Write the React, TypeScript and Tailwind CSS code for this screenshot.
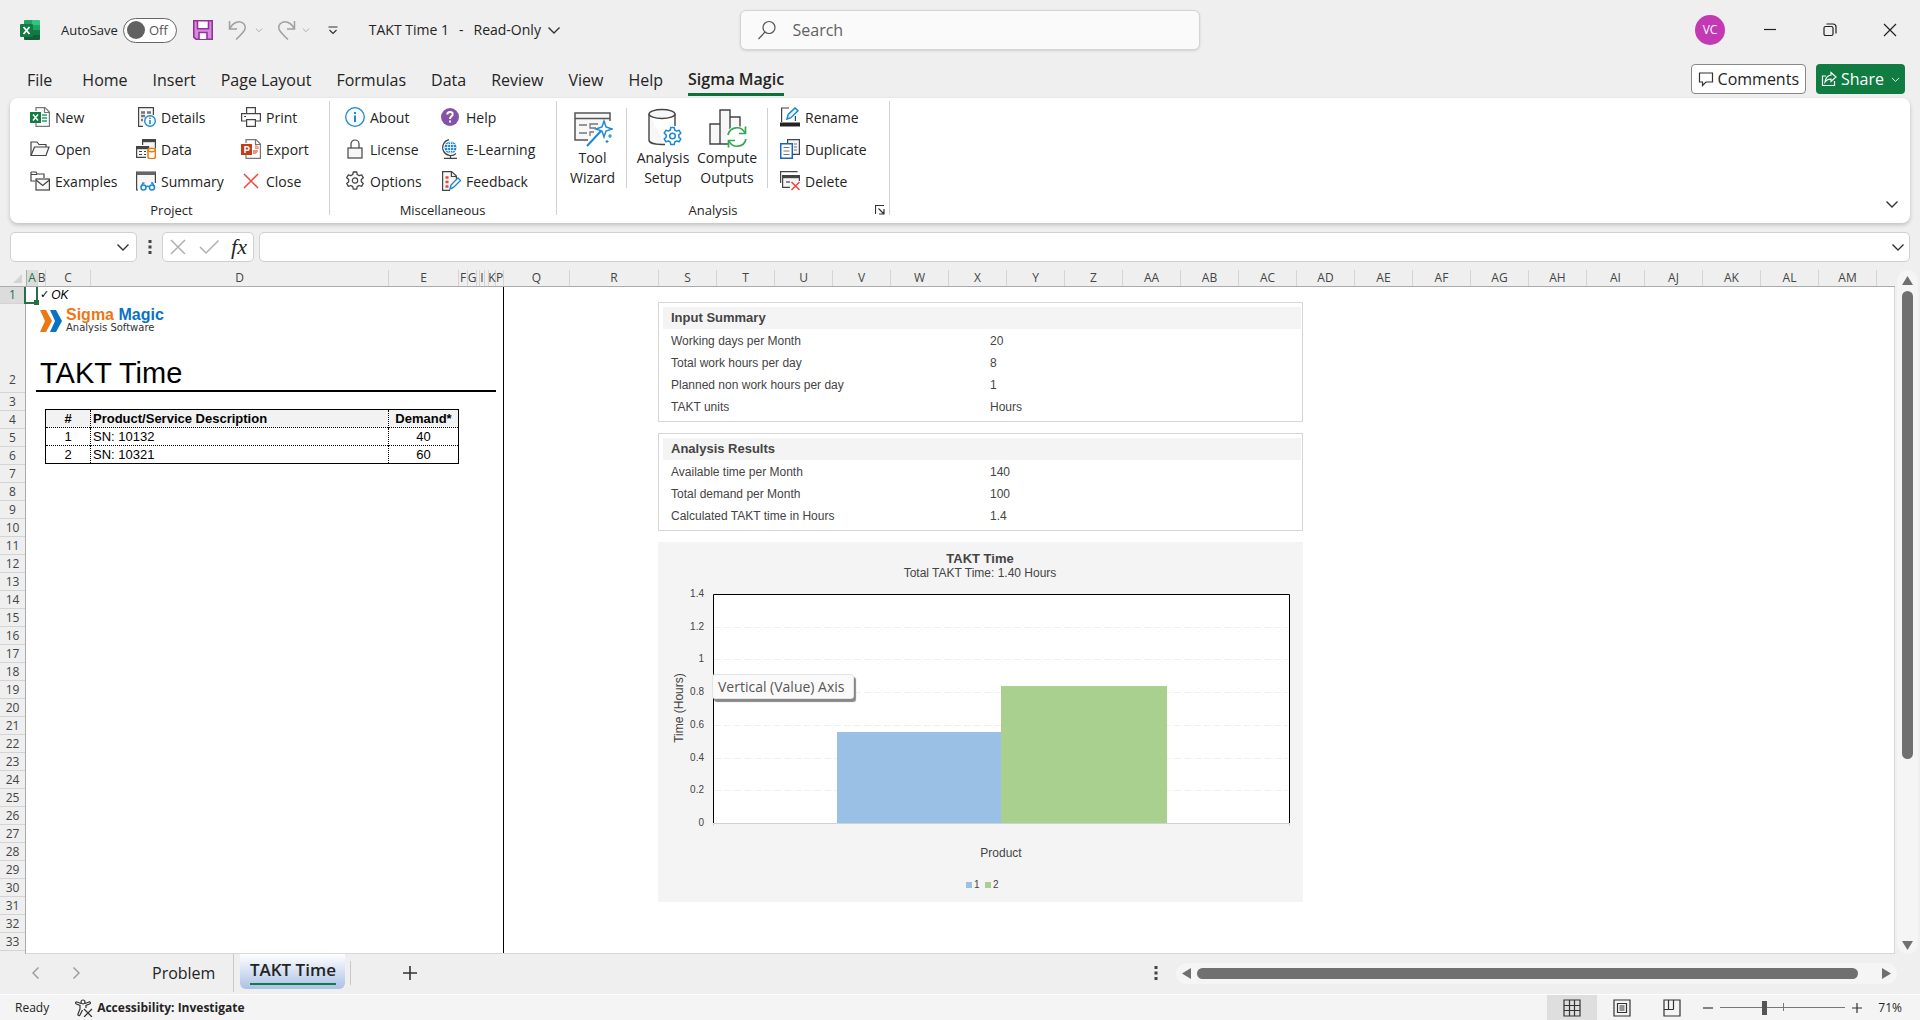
// App.tsx
import React from "react";

const columns = [
  { name: "A", width: 11 },
  { name: "B", width: 8 },
  { name: "C", width: 45 },
  { name: "D", width: 298 },
  { name: "E", width: 70 },
  { name: "F", width: 9 },
  { name: "G", width: 9 },
  { name: "", width: 3 },
  { name: "I", width: 5 },
  { name: "", width: 4 },
  { name: "K", width: 7 },
  { name: "P", width: 8 },
  { name: "Q", width: 66 },
  { name: "R", width: 89 },
  ..."S T U V W X Y Z AA AB AC AD AE AF AG AH AI AJ AK AL AM"
    .split(" ")
    .map((name) => ({ name, width: 58 })),
];

const rows = Array.from({ length: 33 }, (_, i) => {
  if (i === 0) return { name: 1, height: 17 };
  if (i === 1) return { name: 2, height: 89 };
  return { name: i + 1, height: 18 };
});

const tabs = [
  "Home",
  "Insert",
  "Page Layout",
  "Formulas",
  "Data",
  "Review",
  "View",
  "Help",
];

const inputSummary = [
  ["Working days per Month", "20"],
  ["Total work hours per day", "8"],
  ["Planned non work hours per day", "1"],
  ["TAKT units", "Hours"],
];

const analysisResults = [
  ["Available time per Month", "140"],
  ["Total demand per Month", "100"],
  ["Calculated TAKT time in Hours", "1.4"],
];

const products = [
  ["1", "SN: 10132", "40"],
  ["2", "SN: 10321", "60"],
];

interface IconProps {
  size?: number;
  box?: string;
  children: React.ReactNode;
}

const Icon: React.FC<IconProps> = ({ size = 20, box, children }) => (
  <svg
    width={size}
    height={size}
    viewBox={box || "0 0 20 20"}
    fill="none"
    stroke="#444"
    strokeWidth="1.2"
    className="shrink-0"
    aria-hidden="true"
  >
    {children}
  </svg>
);

const Chevron = ({ size = 14, color = "#333" }) => (
  <svg
    width={size}
    height={size}
    viewBox="0 0 14 14"
    fill="none"
    stroke={color}
    strokeWidth="1.4"
    className="shrink-0"
    aria-hidden="true"
  >
    <path d="M1.5 4.5 7 10l5.500-5.500" />
  </svg>
);

const ExcelLogo = () => (
  <svg width="20" height="20" viewBox="0 0 20 20" aria-hidden="true">
    <path d="M4 1a1 1 0 0 1 1-1h7v5H4z" fill="#21a366" />
    <path d="M12 0h7a1 1 0 0 1 1 1v4h-8z" fill="#33c481" />
    <path d="M4 5h8v5H4z" fill="#107c41" />
    <path d="M12 5h8v5h-8z" fill="#21a366" />
    <path d="M4 10h8v5H4z" fill="#185c37" />
    <path d="M12 10h8v5h-8z" fill="#107c41" />
    <path d="M4 15h16v4a1 1 0 0 1-1 1H5a1 1 0 0 1-1-1z" fill="#185c37" />
    <rect y="4" width="13" height="13" rx="1" fill="#107c41" />
    <path d="m3.500 7 6 7M9.500 7l-6 7" stroke="#fff" strokeWidth="1.8" />
  </svg>
);

const NewIcon = () => (
  <Icon>
    <path d="M6 4V.6h9L19.400 5v14.400H6V16" stroke="#777" />
    <path d="M14.500.6V5.500h5" stroke="#777" />
    <path d="M12 8h5M12 11h5M12 14h5" stroke="#21a366" strokeWidth="1.6" />
    <rect y="5" width="11" height="11" fill="#107c41" stroke="none" />
    <path d="m3 7.500 5 6M8 7.500l-5 6" stroke="#fff" strokeWidth="1.5" />
  </Icon>
);

const OpenIcon = () => (
  <Icon>
    <path d="M1 16V3h6l2 2.500h7V8" fill="#f7f7f7" />
    <path d="M1 16.500 4.500 8H19l-3 8.500z" fill="#f7f7f7" />
  </Icon>
);

const ExamplesIcon = () => (
  <Icon>
    <path d="M1 1h5l1 2h7v4M1 1v9h4" />
    <rect x="6" y="8" width="13.400" height="11" fill="#f7f7f7" />
    <path d="m6 9 6.700 5.500L19.400 9M1 3.500h6" />
  </Icon>
);

const DetailsIcon = () => (
  <Icon>
    <path d="M7 19.400H2.600V.6h14.800V8" fill="#f7f7f7" />
    <path d="M5 5.500h4M11 5.500h4M5 9h4M5 13h2" stroke="#777" strokeWidth="2.400" />
    <circle cx="14" cy="14" r="5.300" fill="#fff" stroke="#1e88d2" strokeWidth="1.400" />
    <path d="M14 13v4.200M14 10.600v1.400" stroke="#1e88d2" strokeWidth="1.600" />
  </Icon>
);

const DataIcon = () => (
  <Icon>
    <path d="M6.600 6V.6h12.800v9" fill="#f7f7f7" />
    <path d="M6.600 2h12.800" strokeWidth="2.400" />
    <path d="M10 18.400H.6V7.600h12V10" fill="#f7f7f7" />
    <path d="M.6 9h12" strokeWidth="2.400" />
    <path d="M3 12.500h3M3 15.500h3M8 12.500h2M8 15.500h2" />
    <path
      d="M12 11v7c0 1 1.500 1.700 3.700 1.700s3.700-.7 3.700-1.700v-7"
      fill="#fff"
      stroke="#e8790c"
      strokeWidth="1.500"
    />
    <ellipse cx="15.700" cy="11" rx="3.700" ry="1.700" fill="#fff" stroke="#e8790c" strokeWidth="1.500" />
  </Icon>
);

const SummaryIcon = () => (
  <Icon>
    <path d="M2 19H.6V1h18.800v11" fill="#f7f7f7" />
    <path d="M.6 2.500h18.800" stroke="#666" strokeWidth="3" />
    <g stroke="#1e88d2" strokeWidth="1.500">
      <circle cx="7.500" cy="16.500" r="2.500" />
      <circle cx="16" cy="16.500" r="2.500" />
      <path d="M10 15.800q1.700-1 3.500 0M5 16l2-4h1.500M18.500 16l-2-4H15" />
    </g>
  </Icon>
);

const PrintIcon = () => (
  <Icon>
    <path d="M5.600 6V.6h8.800V6" />
    <path d="M5 14H.6V6.600h18.800V14H15" fill="none" />
    <path d="M5.600 12.600h8.800v6.800H5.600zM3 9.500h2" />
  </Icon>
);

const ExportIcon = () => (
  <Icon>
    <path d="M5 4V.6h10L19.400 5v14.400H5V16" stroke="#777" />
    <path d="M14.500.6V5.500h5" stroke="#777" />
    <path d="M12 7v8a4 4 0 0 0 5-4h-5z" fill="#ff8f6b" stroke="none" />
    <path d="M14 6a4 4 0 0 1 4 4h-4z" fill="#f3a48c" stroke="none" />
    <rect y="5" width="11" height="11" fill="#c43e1c" stroke="none" />
    <path d="M4 14V7.700h2.200a1.700 1.700 0 0 1 0 3.600H4" stroke="#fff" strokeWidth="1.500" />
  </Icon>
);

const CloseIcon = () => (
  <Icon>
    <path d="m3 3 14 14M17 3 3 17" stroke="#f04438" strokeWidth="1.500" />
  </Icon>
);

const AboutIcon = () => (
  <Icon>
    <circle cx="10" cy="10" r="9.300" stroke="#1e88d2" strokeWidth="1.300" fill="#f7fbff" />
    <path d="M10 8.500V15M10 5v2" stroke="#1e88d2" strokeWidth="2" />
  </Icon>
);

const LicenseIcon = () => (
  <Icon>
    <path d="M6 9V5a4 4 0 0 1 8 0v4" />
    <rect x="3" y="9" width="14" height="10" fill="#f7f7f7" />
  </Icon>
);

const gear =
  "M8.300 1h3.400l.5 2.500 1.900 1.100 2.500-.8 1.700 2.900-2 1.700v2.300l2 1.700-1.700 2.900-2.500-.8-1.900 1.100-.5 2.500H8.300l-.5-2.500-1.900-1.100-2.500.8-1.700-2.900 2-1.700V8.400l-2-1.700 1.700-2.900 2.500.8 1.900-1.100z";

const OptionsIcon = () => (
  <Icon>
    <path d={gear} strokeLinejoin="round" strokeWidth="1.300" />
    <circle cx="10" cy="9.500" r="2.700" />
  </Icon>
);

const HelpIcon = () => (
  <Icon>
    <circle cx="9" cy="10" r="9" fill="#8552a8" stroke="none" />
    <path d="M6.300 7.500Q6.300 5 9 5t2.700 2.300C11.700 9.300 9 9.500 9 12M9 13.500v2" stroke="#fff" strokeWidth="2" />
  </Icon>
);

const GlobeIcon = () => (
  <Icon>
    <circle cx="9.500" cy="8.500" r="6" fill="#1e88d2" stroke="none" />
    <path d="M3.500 8.500h12M9.500 2.500v12M4.500 5.500h10M4.500 11.500h10" stroke="#fff" strokeWidth=".8" />
    <ellipse cx="9.500" cy="8.500" rx="3" ry="6" stroke="#fff" strokeWidth=".8" />
    <path d="M8 .7A8 8 0 1 0 15 14.500M9.500 16.500V19M3 19.300h13" />
  </Icon>
);

const FeedbackIcon = () => (
  <Icon>
    <path d="M9 19.400H1.600V.6h9L15.400 5v4" fill="#f7f7f7" />
    <path d="M10.400.6V5.500h5" />
    <path d="M4.500 6.500h3M4.500 11h3M4.500 15.500h3" stroke="#f04438" strokeWidth="2.600" />
    <path d="m9 18 1-4 7-7 2.500 2.500-7 7z" stroke="#1e88d2" fill="#fff" strokeWidth="1.400" />
  </Icon>
);

const RenameIcon = () => (
  <Icon>
    <path d="M9 1H1.600v14M15.400 9v5" />
    <path d="m7 12 1.200-4.500L15 .9l3 2.800-7 7z" stroke="#1e88d2" fill="#e8f4fc" strokeWidth="1.500" />
    <path d="M0 17.500h20" stroke="#222" strokeWidth="4" />
  </Icon>
);

const DuplicateIcon = () => (
  <Icon>
    <path d="M7.600.6h11.800v14.800H7.600z" fill="#f7f7f7" />
    <path d="M14 5h3M14 8h3M14 11h3" stroke="#777" />
    <path d="M.7 4.700h11.600v14.600H.7z" fill="#fff" stroke="#1565c0" strokeWidth="1.500" />
    <path d="M3.500 8.500h6M3.500 12h6M3.500 15.500h6" stroke="#777" />
  </Icon>
);

const DeleteIcon = () => (
  <Icon>
    <path d="M.6 12V.6h17" />
    <path d="M10 16.400H2.600V4.600h16.800V10" fill="#f7f7f7" />
    <path d="M2.600 6h16.800" strokeWidth="2.400" />
    <path d="M6 11h4" />
    <path d="m11.500 11 8 8M19.500 11l-8 8" stroke="#f04438" strokeWidth="1.500" />
  </Icon>
);

const WizardIcon = () => (
  <Icon size={40} box="0 0 40 40">
    <path d="M15 32H2V5h35v8" fill="#f7f7f7" stroke="#555" strokeWidth="1.500" />
    <path d="M2 10.500h35" stroke="#555" strokeWidth="1.500" />
    <path d="M6 17h8M6 25h8M25 16h-8v4h6M21 24h-4v4" stroke="#777" strokeWidth="1.300" />
    <path d="m14 38 14-15" stroke="#1e88d2" strokeWidth="2" />
    <path
      d="m31 13 2 6 6 2-6 2-2 6-2-6-6-2 6-2z"
      fill="#fff"
      stroke="#1e88d2"
      strokeWidth="1.500"
    />
    <path d="M37 26v4M35 28h4M34 32v3M32.500 33.500h3" stroke="#1e88d2" strokeWidth="1.200" />
  </Icon>
);

const AnalysisIcon = () => (
  <Icon size={40} box="0 0 40 40">
    <path d="M6 6v26c0 2.500 5 4.500 13 4.500h3M32 6v12" strokeWidth="1.400" fill="#f7f7f7" />
    <ellipse cx="19" cy="6" rx="13" ry="4.500" fill="#f7f7f7" strokeWidth="1.400" />
    <g transform="translate(19.500 18.500)">
      <path d={gear} stroke="#1e88d2" strokeWidth="1.500" fill="#fff" strokeLinejoin="round" />
      <circle cx="10" cy="9.500" r="2.800" stroke="#1e88d2" strokeWidth="1.500" />
    </g>
  </Icon>
);

const ComputeIcon = () => (
  <Icon size={40} box="0 0 40 40">
    <path d="M3 16h10v20H3zM13 2h10v34H13zM23 9h10v12H23z" fill="#f7f7f7" strokeWidth="1.400" />
    <circle cx="30" cy="29" r="11" fill="#fff" stroke="none" />
    <g stroke="#34a853" strokeWidth="1.700">
      <path d="M21 27a9 9 0 0 1 17-2M39 31a9 9 0 0 1-17 2" />
      <path d="M38.500 18.500V25.500H32M21.500 39.500V32.500H28" />
    </g>
  </Icon>
);

interface RibbonButtonProps {
  icon: React.ReactNode;
  label: string;
}

const RibbonButton: React.FC<RibbonButtonProps> = ({ icon, label }) => (
  <button className="flex items-center gap-[5px] h-8 whitespace-nowrap">
    {icon}
    {label}
  </button>
);

const BigButton: React.FC<RibbonButtonProps> = ({ icon, label }) => (
  <button className="flex w-16 flex-col items-center leading-5">
    {icon}
    <span className="w-14 flex justify-center text-center">{label}</span>
  </button>
);

const TitleBar = () => (
  <header className="flex h-[60px] items-center text-sm">
    <div className="flex flex-1 items-center pl-5">
      <ExcelLogo />
      <span id="autosave" className="ml-[21px] text-[13px]">
        AutoSave
      </span>
      <button
        role="switch"
        aria-checked="false"
        aria-labelledby="autosave"
        className="ml-[5px] flex h-[25px] w-[54px] items-center justify-between rounded-full border border-[#666] bg-white pl-[3px] pr-2 text-[13px] text-[#555]"
      >
        <span className="h-[18px] w-[18px] rounded-full bg-[#616161]" />
        Off
      </button>
      <button aria-label="Save" className="ml-4">
        <Icon>
          <path d="M.8.8h18.400v18.400H3l-2.200-2z" fill="#d78bdc" stroke="#93329e" strokeWidth="1.600" />
          <path d="M4.500.8h11v8h-11zM6 19v-6.500h8V19" fill="#fff" stroke="#93329e" strokeWidth="1.600" />
        </Icon>
      </button>
      <button aria-label="Undo" className="ml-[15px]">
        <Icon>
          <path d="M1.500 1v8h7.500M1.500 9C5 2 12-.5 16 4c3 4 1 7-8 15.500" stroke="#a0a0a0" strokeWidth="1.500" />
        </Icon>
      </button>
      <span className="ml-[7px]">
        <Chevron size={8} color="#a0a0a0" />
      </span>
      <button aria-label="Redo" className="ml-[13px]">
        <Icon>
          <path d="M18.500 1v8H11M18.500 9C15 2 8-.5 4 4c-3 4-1 7 8 15.500" stroke="#a0a0a0" strokeWidth="1.500" />
        </Icon>
      </button>
      <span className="ml-[6px]">
        <Chevron size={8} color="#a0a0a0" />
      </span>
      <button aria-label="Customize Quick Access Toolbar" className="ml-[18px]">
        <Icon size={10} box="0 0 10 10">
          <path d="M.5 2h9M1.500 5 5 8.500 8.500 5" stroke="#333" />
        </Icon>
      </button>
      <div className="ml-[31px] flex items-center gap-[10px] whitespace-nowrap">
        <span>TAKT Time 1</span>
        <span>-</span>
        <span>Read-Only</span>
      </div>
      <span className="ml-[6px]">
        <Chevron />
      </span>
    </div>
    <label className="ml-[21px] flex h-10 w-[460px] items-center rounded-md border border-[#d4d4d4] bg-[#fafafa] px-4 shadow-sm">
      <Icon>
        <circle cx="12" cy="7.500" r="6" stroke="#555" />
        <path d="M8 12 1.500 19" stroke="#555" />
      </Icon>
      <input
        aria-label="Search"
        placeholder="Search"
        className="ml-4 flex-1 bg-transparent text-base outline-none placeholder:text-[#616161]"
      />
    </label>
    <div className="flex flex-1 items-center justify-end pr-[22px]">
      <button className="h-[30px] w-[30px] rounded-full bg-[#c239b3] text-xs text-white">VC</button>
      <button aria-label="Minimize" className="ml-[37px]">
        <Icon size={16} box="0 0 16 16">
          <path d="M2 7.500h12" stroke="#222" />
        </Icon>
      </button>
      <button aria-label="Restore" className="ml-11">
        <Icon size={16} box="0 0 16 16">
          <rect x="2" y="4.500" width="9" height="9" rx="1.500" stroke="#222" />
          <path d="M4.500 2h6.500a3 3 0 0 1 3 3v6.500" stroke="#222" />
        </Icon>
      </button>
      <button aria-label="Close window" className="ml-11">
        <Icon size={16} box="0 0 16 16">
          <path d="m2 2 12 12M14 2 2 14" stroke="#222" />
        </Icon>
      </button>
    </div>
  </header>
);

const TabBar = () => (
  <nav className="flex h-[38px] items-center pl-[27px] pr-[15px] text-base">
    <div className="flex gap-[25px] pt-[2px]">
      <button className="mr-[5px]">File</button>
      {tabs.map((tab) => (
        <button key={tab} className="whitespace-nowrap">
          {tab}
        </button>
      ))}
      <button className="border-b-[3px] border-[#0f703b] font-semibold leading-7 whitespace-nowrap">
        Sigma Magic
      </button>
    </div>
    <button className="ml-auto flex h-[30px] items-center gap-1 rounded border border-[#888] bg-white px-[6px]">
      <Icon size={16} box="0 0 16 16">
        <path d="M1.500 2h13v9H8l-3.500 3.500V11h-3z" stroke="#333" />
      </Icon>
      Comments
    </button>
    <button className="ml-[10px] flex h-[30px] items-center gap-1 rounded bg-[#107c41] px-[5px] text-white">
      <Icon size={16} box="0 0 16 16">
        <path d="M5 5H1.500v9.500h12V10" stroke="#fff" />
        <path d="m10 1.500 5 4.500-5 4.500V8C7 8 5.500 9 4 11c.5-4 2.500-6.500 6-7z" stroke="#fff" />
      </Icon>
      Share
      <span className="ml-[3px]">
        <Chevron size={9} color="#fff" />
      </span>
    </button>
  </nav>
);

const Ribbon = () => (
  <section className="mx-[10px] flex h-[125px] shrink-0 rounded-lg bg-white pt-[3px] pb-2 text-[14px] shadow-[0_2px_4px_#00000033]">
    <div className="flex w-[320px] flex-col border-r border-[#d0d0d0] pl-5">
      <div className="flex h-[103px] shrink-0">
        <div className="w-[106px]">
          <RibbonButton icon={<NewIcon />} label="New" />
          <RibbonButton icon={<OpenIcon />} label="Open" />
          <RibbonButton icon={<ExamplesIcon />} label="Examples" />
        </div>
        <div className="w-[105px]">
          <RibbonButton icon={<DetailsIcon />} label="Details" />
          <RibbonButton icon={<DataIcon />} label="Data" />
          <RibbonButton icon={<SummaryIcon />} label="Summary" />
        </div>
        <div>
          <RibbonButton icon={<PrintIcon />} label="Print" />
          <RibbonButton icon={<ExportIcon />} label="Export" />
          <RibbonButton icon={<CloseIcon />} label="Close" />
        </div>
      </div>
      <span className="pr-4 text-center text-[13px] leading-3">Project</span>
    </div>
    <div className="flex w-[227px] flex-col border-r border-[#d0d0d0] pl-[15px]">
      <div className="flex h-[103px] shrink-0">
        <div className="w-[96px]">
          <RibbonButton icon={<AboutIcon />} label="About" />
          <RibbonButton icon={<LicenseIcon />} label="License" />
          <RibbonButton icon={<OptionsIcon />} label="Options" />
        </div>
        <div>
          <RibbonButton icon={<HelpIcon />} label="Help" />
          <RibbonButton icon={<GlobeIcon />} label="E-Learning" />
          <RibbonButton icon={<FeedbackIcon />} label="Feedback" />
        </div>
      </div>
      <span className="pr-4 text-center text-[13px] leading-3">Miscellaneous</span>
    </div>
    <div className="flex w-[333px] flex-col border-r border-[#d0d0d0]">
      <div className="flex h-[103px] shrink-0">
        <div className="mt-[7px] mb-4 flex w-[70px] justify-center border-r border-[#d0d0d0] pl-[2px]">
          <BigButton icon={<WizardIcon />} label="Tool Wizard" />
        </div>
        <div className="mt-[7px] mb-4 flex w-[141px] justify-center border-r border-[#d0d0d0] pr-1">
          <BigButton icon={<AnalysisIcon />} label="Analysis Setup" />
          <BigButton icon={<ComputeIcon />} label="Compute Outputs" />
        </div>
        <div className="pl-3">
          <RibbonButton icon={<RenameIcon />} label="Rename" />
          <RibbonButton icon={<DuplicateIcon />} label="Duplicate" />
          <RibbonButton icon={<DeleteIcon />} label="Delete" />
        </div>
      </div>
      <div className="flex items-center pr-1 text-[13px] leading-3">
        <span className="flex-1 pr-[6px] text-center">Analysis</span>
        <button aria-label="Analysis options">
          <Icon size={10} box="0 0 10 10">
            <path d="M.5 9V.5H9M3.500 3.500l5 5M9 4v5H4" stroke="#333" />
          </Icon>
        </button>
      </div>
    </div>
    <button aria-label="Collapse ribbon" className="ml-auto mr-[11px] self-end pb-1">
      <Chevron />
    </button>
  </section>
);

const FormulaBar = () => (
  <div className="mx-[10px] mt-[9px] flex h-[30px] shrink-0 items-center">
    <div className="flex h-full w-[127px] items-center rounded-[5px] border border-[#d0d0d0] bg-white pr-[6px]">
      <input aria-label="Name box" className="w-full min-w-0 bg-transparent px-2 outline-none" />
      <Chevron />
    </div>
    <div className="flex w-[25px] justify-center">
      <Icon size={14} box="0 0 14 14">
        <path d="M7 0v14" stroke="#444" strokeWidth="3" strokeDasharray="3 2.500" />
      </Icon>
    </div>
    <div className="flex h-full w-[92px] items-center justify-between rounded-[5px] border border-[#d0d0d0] bg-white px-[6px]">
      <button aria-label="Cancel">
        <Icon size={18} box="0 0 18 18">
          <path d="m2 2 14 14M16 2 2 16" stroke="#b0b0b0" strokeWidth="1.500" />
        </Icon>
      </button>
      <button aria-label="Enter">
        <Icon>
          <path d="m1 10 6 6L19.500 3.500" stroke="#b0b0b0" strokeWidth="1.500" />
        </Icon>
      </button>
      <button className="font-['Liberation_Serif',serif] text-[22px] leading-5 italic">fx</button>
    </div>
    <div className="ml-[5px] flex h-full flex-1 items-center rounded-[5px] border border-[#d0d0d0] bg-white pr-1">
      <input aria-label="Formula bar" className="flex-1 bg-transparent px-2 outline-none" />
      <Chevron />
    </div>
  </div>
);

const SigmaLogo = () => (
  <div className="flex h-[26px] items-center gap-1 pl-[14px]">
    <svg width="22" height="22" viewBox="0 0 22 22" aria-hidden="true">
      <path d="M0 0h6l6 11-6 11H0l5-11z" fill="#ee7613" />
      <path d="M10 0h6l6 11-6 11h-6l5-11z" fill="#0a72c4" />
    </svg>
    <div className="whitespace-nowrap">
      <div className="font-['Liberation_Sans',sans-serif] text-[16px] font-bold leading-[14px] text-[#ee7613]">
        Sigma <span className="text-[#0a72c4]">Magic</span>
      </div>
      <div className="text-[10px] font-['DejaVu_Sans',sans-serif] leading-3 text-[#333]">
        Analysis Software
      </div>
    </div>
  </div>
);

const ProductTable = () => (
  <table className="ml-[19px] w-[414px] table-fixed border-collapse border border-black text-[13px] leading-[17px]">
    <colgroup>
      <col className="w-[45px]" />
      <col />
      <col className="w-[70px]" />
    </colgroup>
    <thead>
      <tr className="bg-[#f2f2f2]">
        <th className="p-0">#</th>
        <th className="border-l border-dotted border-black p-0 pl-[2px] text-left">
          Product/Service Description
        </th>
        <th className="border-l border-dotted border-black p-0">Demand*</th>
      </tr>
    </thead>
    <tbody>
      {products.map(([id, description, demand]) => (
        <tr key={id} className="border-t border-dotted border-black">
          <td className="p-0 text-center">{id}</td>
          <td className="border-l border-dotted border-black p-0 pl-[2px]">{description}</td>
          <td className="border-l border-dotted border-black p-0 text-center">{demand}</td>
        </tr>
      ))}
    </tbody>
  </table>
);

interface SummaryPanelProps {
  title: string;
  items: string[][];
}

const SummaryPanel: React.FC<SummaryPanelProps> = ({ title, items }) => (
  <section className="border border-[#d6d6d6] pt-1 pr-px pl-1 pb-[3px]">
    <h2 className="mb-px bg-[#f4f4f4] pl-2 text-[13px] font-bold leading-[22px]">{title}</h2>
    <table className="w-full table-fixed text-left text-xs leading-[22px]">
      <tbody>
        {items.map(([name, value]) => (
          <tr key={name}>
            <th className="w-1/2 p-0 pl-2 font-normal">{name}</th>
            <td className="p-0 pl-2">{value}</td>
          </tr>
        ))}
      </tbody>
    </table>
  </section>
);

const Chart = () => (
  <figure className="relative">
    <svg
      viewBox="0 0 645 360"
      className="block w-full font-['Liberation_Sans',sans-serif]"
      fill="#444"
      role="img"
      aria-label="TAKT Time chart"
    >
      <rect width="645" height="360" fill="#f4f4f4" />
      <text x="322" y="21" textAnchor="middle" fontSize="13" fontWeight="bold">
        TAKT Time
      </text>
      <text x="322" y="35" textAnchor="middle" fontSize="12">
        Total TAKT Time: 1.40 Hours
      </text>
      <rect x="55" y="52" width="577" height="229" fill="#fff" />
      {["1.4", "1.2", "1", "0.8", "0.6", "0.4", "0.2", "0"].map((label, i) => {
        const y = Math.round(52 + (i * 229) / 7);
        return (
          <g key={label}>
            {i > 0 && i < 7 && (
              <path d={`M56 ${y}.5H630`} stroke="#f0f0f0" strokeDasharray="7 3" />
            )}
            <text x="46" y={y + 3} textAnchor="end" fontSize="10">
              {label}
            </text>
          </g>
        );
      })}
      <rect x="179" y="190" width="165" height="91" fill="#9bc0e6" />
      <rect x="343" y="144" width="166" height="137" fill="#a9d08e" />
      <path d="M55.500 281V52.500h576V281" fill="none" stroke="#000" />
      <path d="M55.500 284v-2.500h576v2.500" fill="none" stroke="#d0d0d0" />
      <text transform="translate(25 166) rotate(-90)" textAnchor="middle" fontSize="12">
        Time (Hours)
      </text>
      <text x="343" y="315" textAnchor="middle" fontSize="12">
        Product
      </text>
      <rect x="308" y="340" width="6" height="6" fill="#9bc0e6" />
      <text x="316" y="346" fontSize="10">
        1
      </text>
      <rect x="327" y="340" width="6" height="6" fill="#a9d08e" />
      <text x="335" y="346" fontSize="10">
        2
      </text>
    </svg>
    <div
      role="tooltip"
      className="absolute top-[132px] left-[54px] rounded-[3px] border border-[#e4e4e4] bg-[#fafafa] pr-2 pl-[5px] font-['Open_Sans',sans-serif] text-sm leading-[23px] text-[#575757] shadow-[2px_3px_1px_#888]"
    >
      Vertical (Value) Axis
    </div>
  </figure>
);

const Sheet = () => (
  <div className="flex min-h-0 flex-1 pt-2">
    <div className="flex min-w-0 flex-1 flex-col">
      <div className="flex h-[17px] shrink-0 overflow-hidden border-b border-[#ababab] text-xs leading-4 text-[#444]">
        <div className="flex w-[27px] shrink-0 items-end justify-end border-r border-[#ababab] pr-1 pb-[3px]">
          <svg width="9" height="9" viewBox="0 0 9 9" aria-hidden="true">
            <path d="M9 0v9H0z" fill="#d4d4d4" />
          </svg>
        </div>
        {columns.map(({ name, width }, i) => (
          <div
            key={i}
            style={{ width }}
            className={`flex shrink-0 justify-center border-r border-[#d4d4d4] ${
              name === "A" ? "bg-[#dcdcdc] text-[#217346]" : ""
            }`}
          >
            {name}
          </div>
        ))}
      </div>
      <div className="flex min-h-0 flex-1 overflow-hidden">
        <div className="w-[26px] shrink-0 border-r border-[#ababab] text-center text-xs text-[#444]">
          {rows.map(({ name, height }) => (
            <div
              key={name}
              style={{ height }}
              className={`flex items-end justify-center border-b border-[#d4d4d4] leading-4 ${
                name === 1 ? "bg-[#dcdcdc] text-[#217346]" : ""
              } ${name === 2 ? "pb-1" : ""}`}
            >
              {name}
            </div>
          ))}
        </div>
        <div className="flex min-w-0 flex-1 border-r border-b border-[#d8d8d8] bg-white font-['Liberation_Sans',sans-serif]">
          <div className="relative w-[478px] shrink-0 border-r border-black text-black">
            <div className="absolute -top-0.5 -left-0.5 h-[19px] w-[14px] border-2 border-[#217346]">
              <div className="absolute -right-[3px] -bottom-[3px] h-[5px] w-[5px] bg-[#217346]" />
            </div>
            <div className="flex h-[21px] gap-[2px] pl-[14px] text-xs leading-4">
              <span className="font-['DejaVu_Sans',sans-serif] text-[11px]">✓</span>
              <i>OK</i>
            </div>
            <SigmaLogo />
            <h1 className="ml-[10px] mr-[7px] mt-[20px] h-[38px] border-b-2 border-black pl-1 text-[29px] leading-[39px]">
              TAKT Time
            </h1>
            <div className="pt-[17px]">
              <ProductTable />
            </div>
          </div>
          <div className="flex w-[799px] flex-col gap-[11px] pt-[15px] pr-0 pl-[154px] text-[#444]">
            <SummaryPanel title="Input Summary" items={inputSummary} />
            <SummaryPanel title="Analysis Results" items={analysisResults} />
            <Chart />
          </div>
        </div>
      </div>
    </div>
    <div className="mx-[2px] flex w-[21px] flex-col items-center rounded-full bg-[#f5f5f5] pt-[6px] pb-1">
      <svg width="11" height="9" viewBox="0 0 11 9" className="shrink-0" aria-hidden="true">
        <path d="M5.500 0 11 9H0z" fill="#707070" />
      </svg>
      <div className="mt-[6px] h-[468px] w-[11px] rounded-full bg-[#707070]" />
      <svg width="11" height="9" viewBox="0 0 11 9" className="mt-auto shrink-0" aria-hidden="true">
        <path d="M0 0h11L5.500 9z" fill="#707070" />
      </svg>
    </div>
  </div>
);

const SheetTabs = () => (
  <div className="flex h-10 shrink-0 items-center pr-[23px] pb-[2px]">
    <button aria-label="Previous sheet" className="ml-[29px] rotate-90">
      <Chevron color="#999" />
    </button>
    <button aria-label="Next sheet" className="ml-[26px] -rotate-90">
      <Chevron color="#999" />
    </button>
    <button className="ml-[69px] pr-[18px] text-base leading-6">Problem</button>
    <button className="h-full border-l border-[#c8c8c8] pb-[3px] pl-[6px]">
      <span className="flex h-[35px] w-[105px] justify-center rounded-b-md bg-linear-to-b from-white to-[#abc1e6] pt-[2px] text-[17px] font-semibold">
        <span className="h-[29px] border-b-2 border-[#107c41] leading-7">TAKT Time</span>
      </span>
    </button>
    <span className="ml-[5px] h-6 border-l border-[#c8c8c8]" />
    <button aria-label="New sheet" className="ml-[52px]">
      <Icon size={14} box="0 0 14 14">
        <path d="M7 0v14M0 7h14" stroke="#333" strokeWidth="1.600" />
      </Icon>
    </button>
    <div className="ml-auto flex w-[748px] items-center">
      <Icon size={14} box="0 0 14 14">
        <path d="M7 0v14" stroke="#444" strokeWidth="3" strokeDasharray="3 2.500" />
      </Icon>
      <div className="ml-auto flex h-[21px] w-[721px] items-center rounded-full bg-[#f5f5f5] px-[6px]">
        <svg width="9" height="11" viewBox="0 0 9 11" aria-hidden="true">
          <path d="M9 0v11L0 5.500z" fill="#707070" />
        </svg>
        <div className="ml-[6px] h-[11px] w-[661px] rounded-full bg-[#707070]" />
        <svg width="9" height="11" viewBox="0 0 9 11" className="ml-auto" aria-hidden="true">
          <path d="M0 0v11l9-5.500z" fill="#707070" />
        </svg>
      </div>
    </div>
  </div>
);

const StatusBar = () => (
  <footer className="flex h-[26px] shrink-0 items-center border-t border-white bg-[#f4f4f4] pr-[18px] pl-[15px] text-xs">
    <span>Ready</span>
    <button className="ml-[26px] flex items-center gap-1 font-bold">
      <Icon size={18} box="0 0 18 18">
        <circle cx="8" cy="3" r="2" stroke="#333" />
        <path
          d="M6 4.500 2 3C.5 2.500 0 4.500 1.500 5L5 6.500v3.500l-2 5c-.5 1.500 1.500 2.300 2 1l2.500-5M10 4.500 14 3c1.500-.5 2 1.500.5 2L11 6.500V9M9 10l8 8M17 10l-8 8"
          stroke="#333"
        />
      </Icon>
      Accessibility: Investigate
    </button>
    <button aria-label="Normal view" className="ml-auto flex h-full w-[50px] items-center justify-center bg-[#dedede]">
      <Icon size={18} box="0 0 18 18">
        <path d="M1 1h16v16H1zM6.500 1v16M11.500 1v16M1 6.500h16M1 11.500h16" stroke="#333" />
      </Icon>
    </button>
    <button aria-label="Page layout view" className="flex w-[50px] justify-center">
      <Icon size={18} box="0 0 18 18">
        <path d="M1 1h16v16H1zM4.500 4.500h9v9h-9zM6.500 7h5M6.500 9h5M6.500 11h5" stroke="#333" />
      </Icon>
    </button>
    <button aria-label="Page break view" className="flex w-[50px] justify-center">
      <Icon size={18} box="0 0 18 18">
        <path d="M1 1h16v16H1zM5.500 1v9.500M10.500 1v9.500M1 10.500h9.500" stroke="#333" />
      </Icon>
    </button>
    <button aria-label="Zoom out" className="ml-[6px]">
      <Icon size={10} box="0 0 10 10">
        <path d="M0 5h10" stroke="#333" />
      </Icon>
    </button>
    <span className="relative ml-[7px] flex w-[125px] items-center">
      <input
        type="range"
        aria-label="Zoom"
        min="10"
        max="190"
        defaultValue="72"
        className="h-px w-full appearance-none bg-[#777] [&::-webkit-slider-thumb]:h-[14px] [&::-webkit-slider-thumb]:w-[5px] [&::-webkit-slider-thumb]:appearance-none [&::-webkit-slider-thumb]:bg-[#555]"
      />
      <span className="absolute left-1/2 -top-1 h-2 w-px bg-[#777]" />
    </span>
    <button aria-label="Zoom in" className="ml-[7px]">
      <Icon size={10} box="0 0 10 10">
        <path d="M0 5h10M5 0v10" stroke="#333" />
      </Icon>
    </button>
    <button className="ml-4">71%</button>
  </footer>
);

export default function App() {
  return (
    <div className="flex h-screen flex-col overflow-hidden bg-[#efefef] font-['Open_Sans','Noto_Sans',sans-serif] text-[#242424]">
      <TitleBar />
      <TabBar />
      <Ribbon />
      <FormulaBar />
      <Sheet />
      <SheetTabs />
      <StatusBar />
    </div>
  );
}
